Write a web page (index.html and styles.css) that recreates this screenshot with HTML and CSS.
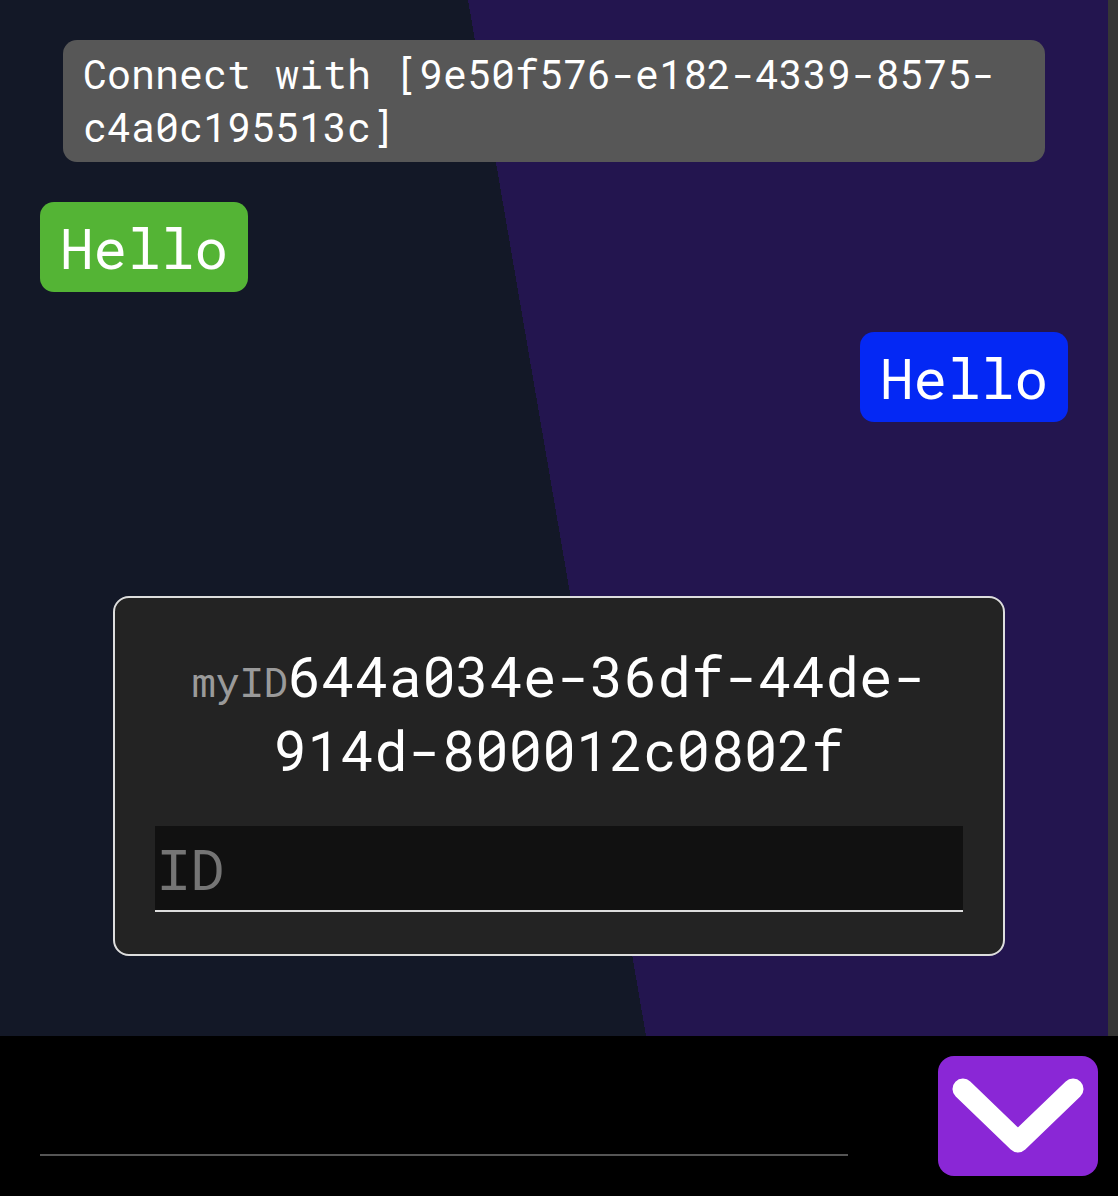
FILE: index.html
```html
<!DOCTYPE html>
<html lang="en">
<head>
<meta charset="utf-8">
<title>Chat</title>
<link rel="stylesheet" href="styles.css">
</head>
<body>
<div class="app">
  <main class="chat">
    <div class="notice">Connect with [9e50f576-e182-4339-8575-c4a0c195513c]</div>
    <div class="msg msg-in">Hello</div>
    <div class="msg msg-out">Hello</div>
  </main>
  <footer class="composer">
    <input class="composer-input" type="text" aria-label="Message">
    <button class="send" type="button" aria-label="Send">
      <svg class="send-icon" viewBox="0 0 160 120" width="160" height="120" aria-hidden="true">
        <polyline points="25,33 80,86 135,33" fill="none" stroke="#ffffff" stroke-width="21" stroke-linecap="round" stroke-linejoin="round"/>
      </svg>
    </button>
  </footer>
</div>
<div class="dialog">
  <div class="my-id"><span class="my-id-label">myID</span>644a034e-36df-44de-914d-800012c0802f</div>
  <input class="id-input" type="text" placeholder="ID">
</div>
</body>
</html>
```

FILE: styles.css
```css
html, body {
  margin: 0;
  padding: 0;
  height: 100%;
}

body {
  font-family: "Roboto Mono", "DejaVu Sans Mono", "Liberation Mono", monospace;
  color: #ffffff;
  background: #000000;
}

.app {
  display: flex;
  flex-direction: column;
  height: 100vh;
}

.chat {
  flex: 1;
  overflow-y: auto;
  display: flex;
  flex-direction: column;
  gap: 40px;
  padding: 40px;
  box-sizing: border-box;
  border-right: 10px solid #363636;
  background: linear-gradient(80.25deg, #131827 calc(50% + 3px), #23154f calc(50% + 3px));
}

.notice {
  margin: 0 23px;
  padding: 8px 20px;
  background: #575757;
  border-radius: 14px;
  font-size: 40px;
  line-height: 52.8px;
}

.msg {
  padding: 8px 20px;
  border-radius: 14px;
  font-size: 56px;
  line-height: 74px;
}

.msg-in {
  align-self: flex-start;
  background: #54b435;
}

.msg-out {
  align-self: flex-end;
  background: #0428f4;
}

.composer {
  flex: 0 0 160px;
  display: flex;
  align-items: center;
  justify-content: space-between;
  padding: 20px 20px 20px 40px;
  box-sizing: border-box;
  background: #000000;
}

.composer-input {
  width: 808px;
  height: 80px;
  box-sizing: border-box;
  background: transparent;
  border: none;
  border-bottom: 2px solid #555555;
  outline: none;
  color: #ffffff;
  font-family: inherit;
  font-size: 56px;
  padding: 0 2px;
}

.send {
  width: 160px;
  height: 120px;
  padding: 0;
  border: none;
  border-radius: 16px;
  background: #8a27d6;
  display: flex;
  align-items: center;
  justify-content: center;
}

.send-icon {
  display: block;
}

.dialog {
  position: fixed;
  top: 596px;
  left: 50%;
  transform: translateX(-50%);
  width: 892px;
  box-sizing: border-box;
  padding: 40px 40px 42px;
  border: 2px solid #dddddd;
  border-radius: 16px;
  background: #232323;
  display: flex;
  flex-direction: column;
  gap: 40px;
}

.my-id {
  text-align: center;
  font-size: 56px;
  line-height: 74px;
}

.my-id-label {
  font-size: 40px;
  line-height: 1;
  color: #9a9a9a;
}

.id-input {
  width: 100%;
  height: 86px;
  box-sizing: border-box;
  margin: 0;
  padding: 0 2px;
  background: #111111;
  border: none;
  border-bottom: 2px solid #dddddd;
  outline: none;
  color: #ffffff;
  font-family: inherit;
  font-size: 56px;
}

.id-input::placeholder {
  color: #757575;
}
```
